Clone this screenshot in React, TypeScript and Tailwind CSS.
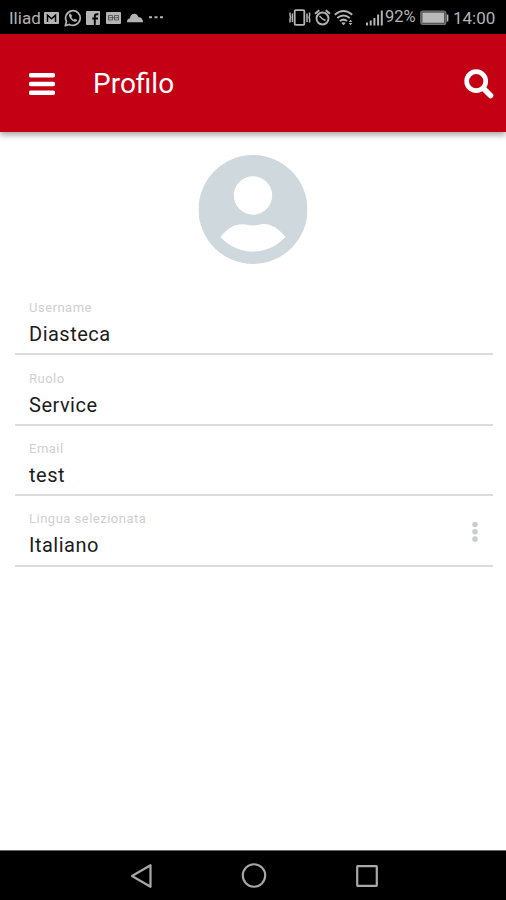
import type { ReactNode } from "react"

type Field = {
  label: string
  value: string
  hasMenu?: boolean
}

const fields: Field[] = [
  { label: "Username", value: "Diasteca" },
  { label: "Ruolo", value: "Service" },
  { label: "Email", value: "test" },
  { label: "Lingua selezionata", value: "Italiano", hasMenu: true },
]

function Icon({ w, h, className = "", children }: { w: number; h: number; className?: string; children: ReactNode }) {
  return (
    <svg width={w} height={h} viewBox={`0 0 ${w} ${h}`} fill="none" className={`shrink-0 ${className}`}>
      {children}
    </svg>
  )
}

function StatusBar() {
  return (
    <div className="flex h-[34px] items-center bg-black pl-[9px] pr-[11px] pt-px text-[#b4b4b4]">
      <span className="w-[35px] whitespace-nowrap pt-px text-[17px] leading-none">Iliad</span>

      {/* Mail */}
      <Icon w={15} h={12}>
        <rect width="15" height="12" rx="1" fill="currentColor" />
        <path d="M3.5 10V3.2l4 3.6 4-3.6V10" stroke="black" strokeWidth="1.5" />
      </Icon>

      {/* WhatsApp */}
      <Icon w={18} h={18} className="ml-[5px]">
        <path d="M1.3 16.7l1.2-4.2a7.3 7.3 0 1 1 2.9 2.9z" stroke="currentColor" strokeWidth="1.7" strokeLinejoin="round" />
        <path
          d="M6.3 4.5c-1 .3-1.5 1.2-1.3 2.2.5 2.8 3 5.3 5.8 6 1 .2 2.2-.5 2.4-1.7l-2.3-1.3-1.1 1C8.800 10.200 7.800 9.200 7.300 8l1-1z"
          fill="currentColor"
        />
      </Icon>

      {/* Facebook */}
      <Icon w={14} h={14} className="ml-1">
        <rect width="14" height="14" rx="1" fill="currentColor" />
        <path d="M8.8 14V5.500c0-1.500.8-2.300 2.200-2.300h1.300M6.300 7.500H12" stroke="black" strokeWidth="1.900" />
      </Icon>

      {/* News card */}
      <Icon w={15} h={12} className="ml-[6px]">
        <rect width="15" height="12" rx="1" fill="currentColor" />
        <path d="M2.5 3.5h4v4.500h-4zM8.500 3.500h4v4.500h-4zM2.500 5.700h10" stroke="#555" strokeWidth="0.900" />
      </Icon>

      {/* Cloud */}
      <Icon w={18} h={10} className="ml-[5px]">
        <path d="M1 9.300C.8 7 2 5.500 4 5.200 4.200 2.500 6 .8 8.200.8c2 0 3.600 1.200 4.200 3.300 2.800.2 4.600 2.200 4.700 5.200z" fill="currentColor" />
      </Icon>

      <Icon w={14} h={3} className="ml-[5px]">
        <path d="M0 1.200h3M5.500 1.200h3M11 1.200h3" stroke="currentColor" strokeWidth="2" />
      </Icon>

      {/* Vibrate */}
      <Icon w={22} h={17} className="ml-auto">
        <rect x="5.700" y="1.200" width="9.600" height="14.600" rx="1" stroke="currentColor" strokeWidth="1.800" />
        <path d="M3.400 4.500v8.500M1 3.500v3l.6 2-.6 1.500v3.500M18 4.500v8.500M20.600 3.500v3l-.6 2 .6 1.500v3.500" stroke="currentColor" strokeWidth="1.500" />
      </Icon>

      {/* Alarm */}
      <Icon w={17} h={17} className="ml-[3px]">
        <circle cx="8.500" cy="9.500" r="6" stroke="currentColor" strokeWidth="1.900" />
        <path d="M1 4.700l4.300-3.500M16 4.700l-4.300-3.500" stroke="currentColor" strokeWidth="2" />
        <path d="M5.500 7l3 3 3 1.500" stroke="currentColor" strokeWidth="1.500" />
      </Icon>

      {/* Wi-Fi */}
      <Icon w={20} h={17} className="ml-[3px]">
        <path d="M.8 5.700q8.700-7.500 17.400 0M3.300 9q6.200-5 12.400 0M6 12q3.500-2.800 7 0" stroke="currentColor" strokeWidth="2" />
        <path d="M7.300 14q2.200-1.300 4.400 0l-2.200 2.300z" fill="currentColor" />
        <path d="M14.600 13l1.900-2.200 1.900 2.200zM14.600 14l1.900 2.200 1.900-2.200z" fill="currentColor" />
      </Icon>

      {/* Signal strength */}
      <Icon w={17} h={16} className="ml-[12px]">
        <path d="M1 15.500v-3M4.700 15.500v-5M8.400 15.500V8M12.100 15.500V4.500M15.800 15.500V.5" stroke="currentColor" strokeWidth="2" />
      </Icon>

      <span className="ml-0.5 w-[35px] whitespace-nowrap text-[16.500px] leading-none">92%</span>

      {/* Battery */}
      <Icon w={29} h={16}>
        <rect x=".8" y="1" width="25" height="13.500" rx="2" fill="#555" stroke="#777" strokeWidth="1.200" />
        <rect x="2.500" y="2.700" width="21.500" height="10" fill="#bababa" />
        <path d="M27.500 4.500v7" stroke="currentColor" strokeWidth="1.700" />
      </Icon>

      <span className="ml-1 w-[42px] whitespace-nowrap pt-px text-[17px] leading-none">14:00</span>
    </div>
  )
}

function Header() {
  return (
    <header className="flex h-[98px] items-center bg-[#c40014] pl-[29px] pr-3 pt-0.5 text-white shadow-[0_3px_6px_rgba(0,0,0,0.35)]">
      <button aria-label="Menu">
        <Icon w={26} h={24}>
          <path d="M2 3.200h22M2 12h22M2 20.700h22" stroke="currentColor" strokeWidth="4.500" strokeLinecap="round" />
        </Icon>
      </button>
      <h1 className="ml-[38px] text-[28px] leading-none">Profilo</h1>
      <button aria-label="Cerca" className="ml-auto">
        <Icon w={30} h={30}>
          <circle cx="12.200" cy="12.200" r="9.500" stroke="currentColor" strokeWidth="4.700" />
          <path d="M19.500 19.500l7 7" stroke="currentColor" strokeWidth="5.500" strokeLinecap="round" />
        </Icon>
      </button>
    </header>
  )
}

function FieldRow({ label, value, hasMenu }: Field) {
  return (
    <div className="flex h-[70.400px] items-center justify-between border-b-2 border-[#dcdcdc] px-3.5">
      <div className="pt-[9px]">
        <p className="text-[13px] leading-[18px] tracking-[0.500px] text-[#d0d0d0]">{label}</p>
        <p className="mt-[3px] text-[20px] leading-7 tracking-[0.500px] text-[#1c1c1c]">{value}</p>
      </div>
      {hasMenu && (
        <button aria-label="Opzioni" className="pt-[3px]">
          <Icon w={8} h={22}>
            <circle cx="4" cy="3.500" r="2.800" fill="#c9cdcf" />
            <circle cx="4" cy="10.800" r="2.800" fill="#c9cdcf" />
            <circle cx="4" cy="18.100" r="2.800" fill="#c9cdcf" />
          </Icon>
        </button>
      )}
    </div>
  )
}

function NavigationBar() {
  return (
    <nav className="flex h-[50px] items-center justify-center gap-[89px] border-t border-[#666] bg-black pl-px text-[#a8a8a8]">
      <Icon w={22} h={26}>
        <path d="M20.500 2.200v21.600L2 13z" stroke="currentColor" strokeWidth="2.200" strokeLinejoin="round" />
      </Icon>
      <Icon w={26} h={26}>
        <circle cx="13" cy="12.500" r="11.200" stroke="currentColor" strokeWidth="2.100" />
      </Icon>
      <Icon w={22} h={22}>
        <rect x="1.200" y="1.200" width="19.600" height="19.600" rx=".5" stroke="currentColor" strokeWidth="2.200" />
      </Icon>
    </nav>
  )
}

export default function App() {
  return (
    <div className="flex h-[900px] w-[506px] flex-col overflow-hidden bg-white font-[Roboto,sans-serif]">
      <StatusBar />
      <Header />
      <main className="flex-1 pl-[15px] pr-[13px] pt-[23px]">
        <Icon w={109} h={109} className="mx-auto -translate-x-[1.500px]">
          <circle cx="54.500" cy="54.500" r="54.500" fill="#cfd8dc" />
          <circle cx="54.500" cy="40.500" r="19.200" fill="white" />
          <path d="M22 82C30 71 40 68 47 69.500q7.500 1.800 15 0C70 67.500 79 72 87 82 69 101.500 40 101.500 22 82z" fill="white" />
        </Icon>
        <div className="mt-[21px]">
          {fields.map((field) => (
            <FieldRow key={field.label} {...field} />
          ))}
        </div>
      </main>
      <NavigationBar />
    </div>
  )
}
